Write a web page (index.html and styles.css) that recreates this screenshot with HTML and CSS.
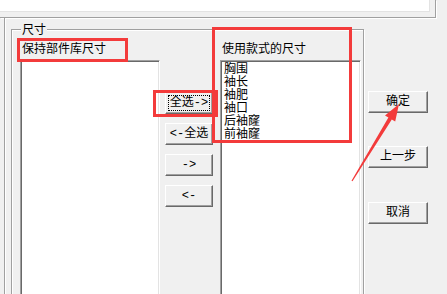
FILE: index.html
```html
<!DOCTYPE html>
<html>
<head>
<meta charset="utf-8">
<link rel="stylesheet" href="styles.css">
</head>
<body>
<div class="page">
  <div class="topframe"><div class="toppanel"></div></div>
  <div class="main">
    <div class="outer">
      <div class="group">
        <span class="legend">尺寸</span>
        <div class="col">
          <div class="label">保持部件库尺寸</div>
          <div class="listbox lb1"></div>
        </div>
        <div class="mid">
          <button class="btn sbtn focus">全选-&gt;</button>
          <button class="btn sbtn">&lt;-全选</button>
          <button class="btn sbtn">-&gt;</button>
          <button class="btn sbtn">&lt;-</button>
        </div>
        <div class="col">
          <div class="label">使用款式的尺寸</div>
          <div class="listbox lb2">
            <div class="item">胸围</div>
            <div class="item">袖长</div>
            <div class="item">袖肥</div>
            <div class="item">袖口</div>
            <div class="item">后袖窿</div>
            <div class="item">前袖窿</div>
          </div>
        </div>
      </div>
    </div>
    <div class="right">
      <button class="btn rbtn ok">确定</button>
      <button class="btn rbtn prev">上一步</button>
      <button class="btn rbtn cancel">取消</button>
    </div>
  </div>
  <div class="mark m1"></div>
  <div class="mark m2"></div>
  <div class="mark m3"></div>
  <svg class="arrow" width="447" height="294" viewBox="0 0 447 294">
    <polygon points="351.5,180.7 388.4,117.5 385,115.4 399,104 395.2,121.6 391.8,119.5 352.5,181.3" fill="#f33b3b"/>
  </svg>
</div>
</body>
</html>
```
FILE: styles.css
```css
* { box-sizing: border-box; }
body {
  margin: 0;
  background: #f0f0f0;
  font: 12px "Noto Sans CJK SC", sans-serif;
  color: #000;
}
.page {
  position: relative;
  width: 447px;
  height: 294px;
  overflow: hidden;
}
.topframe {
  width: 436px;
  height: 18px;
  border-right: 1px solid #a0a0a0;
  border-bottom: 1px solid #a0a0a0;
  box-shadow: 1px 1px 0 #fff;
}
.toppanel {
  width: 430px;
  height: 12px;
  background: #fff;
  border-right: 1px solid #e3e3e3;
  border-bottom: 1px solid #e3e3e3;
}
.main {
  display: flex;
  height: 276px;
}
.outer {
  margin-left: 4px;
  border-left: 1px solid #a0a0a0;
  box-shadow: inset 1px 0 0 #fff;
  padding-left: 6px;
}
.group {
  position: relative;
  margin-top: 11px;
  width: 353px;
  height: 300px;
  border: 1px solid #a0a0a0;
  box-shadow: inset 1px 1px 0 #fff, 1px 1px 0 #fff;
  display: flex;
  padding-left: 8px;
}
.legend {
  position: absolute;
  left: 9px;
  top: -8px;
  padding: 0 1px;
  background: #f0f0f0;
  line-height: 14px;
}
.col {
  display: flex;
  flex-direction: column;
}
.label {
  height: 30px;
  padding: 11px 0 0 2px;
  line-height: 13px;
  white-space: nowrap;
}
.listbox {
  background: #fff;
  border: 1px solid;
  border-color: #a0a0a0 #fff #fff #a0a0a0;
  box-shadow: inset 1px 1px 0 #696969, inset -1px -1px 0 #e3e3e3;
  height: 250px;
}
.lb1 { width: 140px; }
.lb2 { width: 141px; padding-left: 3px; }
.item { line-height: 13px; white-space: nowrap; }
.mid {
  width: 60px;
  padding: 62px 0 0 5px;
  display: flex;
  flex-direction: column;
  gap: 9px;
}
.btn {
  height: 22px;
  padding: 0;
  font: 12px "Liberation Mono", "Noto Sans CJK SC", monospace;
  color: #000;
  line-height: 20px;
  background: #f0f0f0;
  border: 1px solid;
  border-color: #fff #696969 #696969 #fff;
  box-shadow: inset -1px -1px 0 #a0a0a0;
  white-space: nowrap;
}
.sbtn { width: 48px; }
.focus {
  outline: 1px dotted #000;
  outline-offset: -4px;
}
.right {
  margin-left: 4px;
  display: flex;
  flex-direction: column;
}
.rbtn { width: 60px; }
.ok { margin-top: 73px; }
.prev { margin-top: 33px; }
.cancel { margin-top: 34px; }
.mark {
  position: absolute;
  border: 3px solid #f33b3b;
}
.m1 { left: 17px; top: 38px; width: 111px; height: 24px; }
.m2 { left: 212px; top: 27px; width: 140px; height: 116px; }
.m3 { left: 153px; top: 90px; width: 65px; height: 27px; }
.arrow {
  position: absolute;
  left: 0;
  top: 0;
  pointer-events: none;
}
```
